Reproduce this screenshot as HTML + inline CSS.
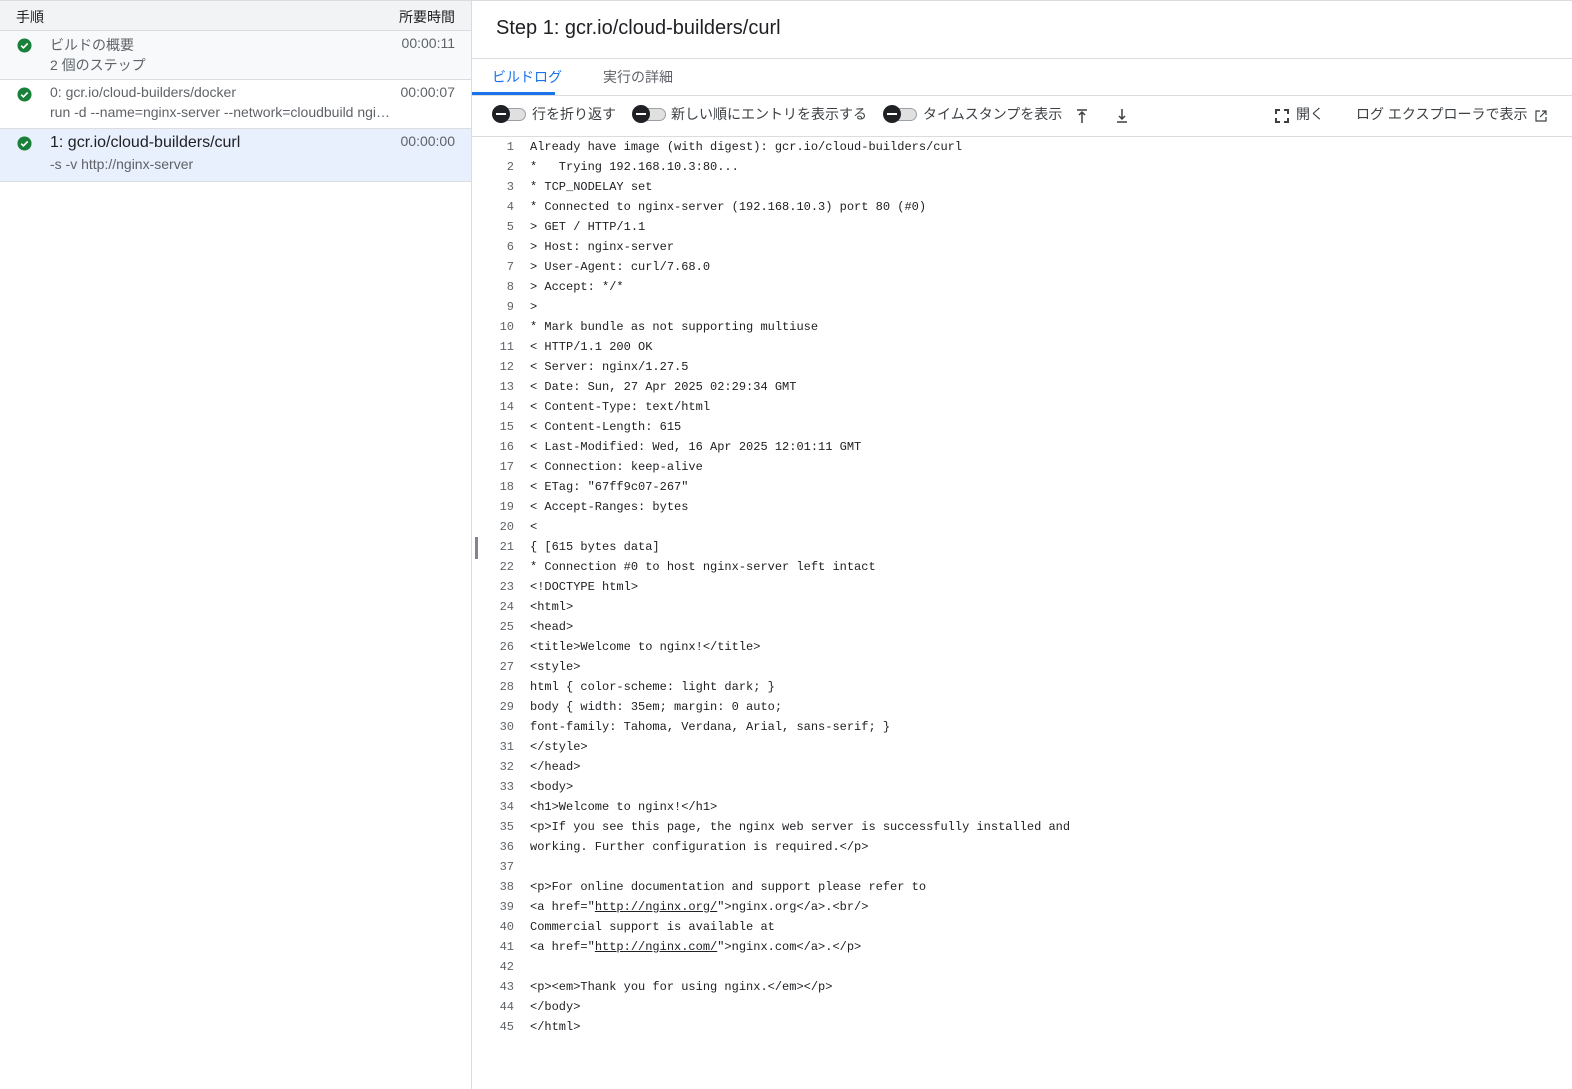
<!DOCTYPE html>
<html><head><meta charset="utf-8">
<style>
*{box-sizing:border-box;margin:0;padding:0}
body{width:1572px;height:1089px;overflow:hidden;background:#fff;font-family:"Liberation Sans","Noto Sans CJK JP",sans-serif;color:#202124;position:relative}
.left{position:absolute;left:0;top:0;width:472px;height:1089px;border-right:1px solid #dadce0;border-top:1px solid #dadce0}
.hdr{height:30px;background:#f1f3f4;border-bottom:1px solid #dadce0;position:relative;font-size:14px}
.hdr .a{position:absolute;left:16px;top:6px}
.hdr .b{position:absolute;right:16px;top:6px}
.row{position:relative;border-bottom:1px solid #dadce0;font-size:14px;color:#5f6368}
.row .ic{position:absolute;left:17px;top:7px;width:15px;height:15px}
.row .t1{position:absolute;left:50px;top:4px;white-space:nowrap}
.row .t2{position:absolute;left:50px;top:24px;white-space:nowrap}
.row .d{position:absolute;right:16px;top:4px}
.right{position:absolute;left:472px;top:0;right:0;height:1089px;border-top:1px solid #dadce0}
.title{position:absolute;left:24px;top:16px;font-size:20px;color:#202124}
.l1{position:absolute;left:0;right:0;top:57px;border-top:1px solid #dadce0}
.tab{position:absolute;top:66px;font-size:14px}
.ul{position:absolute;left:0;top:91px;width:83px;height:3px;background:#1a73e8}
.l2{position:absolute;left:0;right:0;top:94px;border-top:1px solid #dadce0}
.l3{position:absolute;left:0;right:0;top:135px;border-top:1px solid #dadce0}
.tg{position:absolute;top:104px;width:36px;height:18px}
.tg .tr{position:absolute;left:4px;top:3px;width:30px;height:13px;border-radius:7px;background:#e0e0e0;border:1px solid #9aa0a6}
.tg .k{position:absolute;left:0;top:0;width:18px;height:18px;border-radius:50%;background:#202124}
.tg .k:after{content:"";position:absolute;left:4px;top:8px;width:10px;height:2px;background:#fff}
.tl{position:absolute;top:103px;font-size:14px;color:#3c4043}
.log{position:absolute;left:0;top:136px;font-family:"Liberation Mono",monospace;font-size:12px;color:#202124}
.ln{position:absolute;height:20px;line-height:20px;white-space:pre}
.n{position:absolute;width:42px;text-align:right;color:#5f6368;left:0}
.c{position:absolute;left:58px}
u{text-decoration:underline}
</style></head><body>
<div class="left">
 <div class="hdr"><span class="a">手順</span><span class="b">所要時間</span></div>
 <div class="row" style="height:49px;background:#f8f9fa">
  <svg class="ic" viewBox="0 0 16 16"><circle cx="8" cy="8" r="7.5" fill="#188038"/><path d="M4.5 8.2l2.3 2.3 4.6-4.6" stroke="#fff" stroke-width="1.8" fill="none"/></svg>
  <span class="t1">ビルドの概要</span><span class="t2">2 個のステップ</span><span class="d">00:00:11</span></div>
 <div class="row" style="height:49px">
  <svg class="ic" viewBox="0 0 16 16"><circle cx="8" cy="8" r="7.5" fill="#188038"/><path d="M4.5 8.2l2.3 2.3 4.6-4.6" stroke="#fff" stroke-width="1.8" fill="none"/></svg>
  <span class="t1">0: gcr.io/cloud-builders/docker</span><span class="t2">run -d --name=nginx-server --network=cloudbuild ngi…</span><span class="d">00:00:07</span></div>
 <div class="row" style="height:53px;background:#e8f0fe">
  <svg class="ic" viewBox="0 0 16 16"><circle cx="8" cy="8" r="7.5" fill="#188038"/><path d="M4.5 8.2l2.3 2.3 4.6-4.6" stroke="#fff" stroke-width="1.8" fill="none"/></svg>
  <span class="t1" style="font-size:16px;color:#202124;top:5px">1: gcr.io/cloud-builders/curl</span><span class="t2" style="top:27px">-s -v http://nginx-server</span><span class="d">00:00:00</span></div>
</div>
<div class="right">
 <div class="title">Step 1: gcr.io/cloud-builders/curl</div>
 <div class="l1"></div>
 <div class="tab" style="left:20px;color:#1a73e8">ビルドログ</div>
 <div class="tab" style="left:131px;color:#5f6368">実行の詳細</div>
 <div class="ul"></div>
 <div class="l2"></div>
 <div class="tg" style="left:20px"><div class="tr"></div><div class="k"></div></div>
 <div class="tl" style="left:60px">行を折り返す</div>
 <div class="tg" style="left:160px"><div class="tr"></div><div class="k"></div></div>
 <div class="tl" style="left:199px">新しい順にエントリを表示する</div>
 <div class="tg" style="left:411px"><div class="tr"></div><div class="k"></div></div>
 <div class="tl" style="left:451px">タイムスタンプを表示</div>
 <svg style="position:absolute;left:603px;top:107px" width="14" height="16" viewBox="0 0 14 16"><path d="M2 2h10M7 4v11M4 7l3-3 3 3" stroke="#3c4043" stroke-width="1.5" fill="none"/></svg>
 <svg style="position:absolute;left:643px;top:106px" width="14" height="16" viewBox="0 0 14 16"><path d="M2 15h10M7 2v10M4 9l3 3 3-3" stroke="#3c4043" stroke-width="1.5" fill="none"/></svg>
 <svg style="position:absolute;left:803px;top:108px" width="14" height="14" viewBox="0 0 14 14"><path d="M1 5V1h4M9 1h4v4M13 9v4H9M5 13H1V9" stroke="#3c4043" stroke-width="2" fill="none"/></svg>
 <div class="tl" style="left:824px">開く</div>
 <div class="tl" style="left:884px">ログ エクスプローラで表示</div>
 <svg style="position:absolute;left:1063px;top:109px" width="12" height="12" viewBox="0 0 12 12"><path d="M5 1H1v10h10V7M7 1h4v4M11 1L5 7" stroke="#3c4043" stroke-width="1.2" fill="none"/></svg>
 <div class="l3"></div>
 <div style="position:absolute;left:3px;top:536px;width:3px;height:22px;background:#80868b"></div>
 <div class="log">
<div class="ln" style="top:0px"><span class="n">1</span><span class="c">Already have image (with digest): gcr.io/cloud-builders/curl</span></div>
<div class="ln" style="top:20px"><span class="n">2</span><span class="c">*   Trying 192.168.10.3:80...</span></div>
<div class="ln" style="top:40px"><span class="n">3</span><span class="c">* TCP_NODELAY set</span></div>
<div class="ln" style="top:60px"><span class="n">4</span><span class="c">* Connected to nginx-server (192.168.10.3) port 80 (#0)</span></div>
<div class="ln" style="top:80px"><span class="n">5</span><span class="c">&gt; GET / HTTP/1.1</span></div>
<div class="ln" style="top:100px"><span class="n">6</span><span class="c">&gt; Host: nginx-server</span></div>
<div class="ln" style="top:120px"><span class="n">7</span><span class="c">&gt; User-Agent: curl/7.68.0</span></div>
<div class="ln" style="top:140px"><span class="n">8</span><span class="c">&gt; Accept: */*</span></div>
<div class="ln" style="top:160px"><span class="n">9</span><span class="c">&gt;</span></div>
<div class="ln" style="top:180px"><span class="n">10</span><span class="c">* Mark bundle as not supporting multiuse</span></div>
<div class="ln" style="top:200px"><span class="n">11</span><span class="c">&lt; HTTP/1.1 200 OK</span></div>
<div class="ln" style="top:220px"><span class="n">12</span><span class="c">&lt; Server: nginx/1.27.5</span></div>
<div class="ln" style="top:240px"><span class="n">13</span><span class="c">&lt; Date: Sun, 27 Apr 2025 02:29:34 GMT</span></div>
<div class="ln" style="top:260px"><span class="n">14</span><span class="c">&lt; Content-Type: text/html</span></div>
<div class="ln" style="top:280px"><span class="n">15</span><span class="c">&lt; Content-Length: 615</span></div>
<div class="ln" style="top:300px"><span class="n">16</span><span class="c">&lt; Last-Modified: Wed, 16 Apr 2025 12:01:11 GMT</span></div>
<div class="ln" style="top:320px"><span class="n">17</span><span class="c">&lt; Connection: keep-alive</span></div>
<div class="ln" style="top:340px"><span class="n">18</span><span class="c">&lt; ETag: "67ff9c07-267"</span></div>
<div class="ln" style="top:360px"><span class="n">19</span><span class="c">&lt; Accept-Ranges: bytes</span></div>
<div class="ln" style="top:380px"><span class="n">20</span><span class="c">&lt;</span></div>
<div class="ln" style="top:400px"><span class="n">21</span><span class="c">{ [615 bytes data]</span></div>
<div class="ln" style="top:420px"><span class="n">22</span><span class="c">* Connection #0 to host nginx-server left intact</span></div>
<div class="ln" style="top:440px"><span class="n">23</span><span class="c">&lt;!DOCTYPE html&gt;</span></div>
<div class="ln" style="top:460px"><span class="n">24</span><span class="c">&lt;html&gt;</span></div>
<div class="ln" style="top:480px"><span class="n">25</span><span class="c">&lt;head&gt;</span></div>
<div class="ln" style="top:500px"><span class="n">26</span><span class="c">&lt;title&gt;Welcome to nginx!&lt;/title&gt;</span></div>
<div class="ln" style="top:520px"><span class="n">27</span><span class="c">&lt;style&gt;</span></div>
<div class="ln" style="top:540px"><span class="n">28</span><span class="c">html { color-scheme: light dark; }</span></div>
<div class="ln" style="top:560px"><span class="n">29</span><span class="c">body { width: 35em; margin: 0 auto;</span></div>
<div class="ln" style="top:580px"><span class="n">30</span><span class="c">font-family: Tahoma, Verdana, Arial, sans-serif; }</span></div>
<div class="ln" style="top:600px"><span class="n">31</span><span class="c">&lt;/style&gt;</span></div>
<div class="ln" style="top:620px"><span class="n">32</span><span class="c">&lt;/head&gt;</span></div>
<div class="ln" style="top:640px"><span class="n">33</span><span class="c">&lt;body&gt;</span></div>
<div class="ln" style="top:660px"><span class="n">34</span><span class="c">&lt;h1&gt;Welcome to nginx!&lt;/h1&gt;</span></div>
<div class="ln" style="top:680px"><span class="n">35</span><span class="c">&lt;p&gt;If you see this page, the nginx web server is successfully installed and</span></div>
<div class="ln" style="top:700px"><span class="n">36</span><span class="c">working. Further configuration is required.&lt;/p&gt;</span></div>
<div class="ln" style="top:720px"><span class="n">37</span><span class="c"></span></div>
<div class="ln" style="top:740px"><span class="n">38</span><span class="c">&lt;p&gt;For online documentation and support please refer to</span></div>
<div class="ln" style="top:760px"><span class="n">39</span><span class="c">&lt;a href="<u>http://nginx.org/</u>"&gt;nginx.org&lt;/a&gt;.&lt;br/&gt;</span></div>
<div class="ln" style="top:780px"><span class="n">40</span><span class="c">Commercial support is available at</span></div>
<div class="ln" style="top:800px"><span class="n">41</span><span class="c">&lt;a href="<u>http://nginx.com/</u>"&gt;nginx.com&lt;/a&gt;.&lt;/p&gt;</span></div>
<div class="ln" style="top:820px"><span class="n">42</span><span class="c"></span></div>
<div class="ln" style="top:840px"><span class="n">43</span><span class="c">&lt;p&gt;&lt;em&gt;Thank you for using nginx.&lt;/em&gt;&lt;/p&gt;</span></div>
<div class="ln" style="top:860px"><span class="n">44</span><span class="c">&lt;/body&gt;</span></div>
<div class="ln" style="top:880px"><span class="n">45</span><span class="c">&lt;/html&gt;</span></div>
 </div>
</div>
</body></html>
